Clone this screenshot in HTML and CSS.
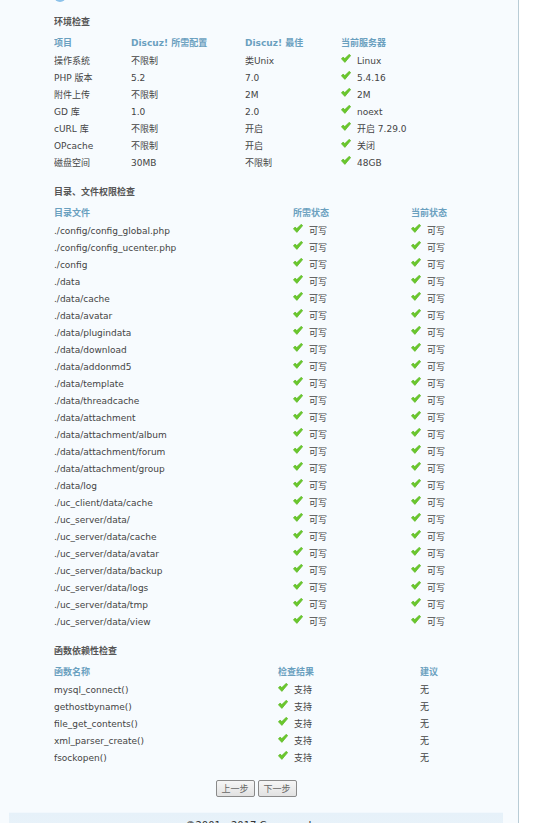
FILE: index.html
```html
<!DOCTYPE html>
<html lang="zh-CN">
<head>
<meta charset="utf-8">
<title>Discuz! 安装向导</title>
<link rel="stylesheet" href="styles.css">
</head>
<body>
<div class="main">
  <div class="stepdot"></div>
  <div class="content">

    <div class="section">
      <h3 class="title">环境检查</h3>
      <div class="tb tb1">
        <div class="row head"><span>项目</span><span>Discuz! 所需配置</span><span>Discuz! 最佳</span><span>当前服务器</span></div>
        <div class="row"><span>操作系统</span><span>不限制</span><span>类Unix</span><span class="ok"><svg viewBox="0 0 10 9"><path d="M0.4 4.8 L2.1 3.1 L3.8 4.6 L8.3 0.3 L9.7 1.6 L3.9 8.4 Z"/></svg>Linux</span></div>
        <div class="row"><span>PHP 版本</span><span>5.2</span><span>7.0</span><span class="ok"><svg viewBox="0 0 10 9"><path d="M0.4 4.8 L2.1 3.1 L3.8 4.6 L8.3 0.3 L9.7 1.6 L3.9 8.4 Z"/></svg>5.4.16</span></div>
        <div class="row"><span>附件上传</span><span>不限制</span><span>2M</span><span class="ok"><svg viewBox="0 0 10 9"><path d="M0.4 4.8 L2.1 3.1 L3.8 4.6 L8.3 0.3 L9.7 1.6 L3.9 8.4 Z"/></svg>2M</span></div>
        <div class="row"><span>GD 库</span><span>1.0</span><span>2.0</span><span class="ok"><svg viewBox="0 0 10 9"><path d="M0.4 4.8 L2.1 3.1 L3.8 4.6 L8.3 0.3 L9.7 1.6 L3.9 8.4 Z"/></svg>noext</span></div>
        <div class="row"><span>cURL 库</span><span>不限制</span><span>开启</span><span class="ok"><svg viewBox="0 0 10 9"><path d="M0.4 4.8 L2.1 3.1 L3.8 4.6 L8.3 0.3 L9.7 1.6 L3.9 8.4 Z"/></svg>开启 7.29.0</span></div>
        <div class="row"><span>OPcache</span><span>不限制</span><span>开启</span><span class="ok"><svg viewBox="0 0 10 9"><path d="M0.4 4.8 L2.1 3.1 L3.8 4.6 L8.3 0.3 L9.7 1.6 L3.9 8.4 Z"/></svg>关闭</span></div>
        <div class="row"><span>磁盘空间</span><span>30MB</span><span>不限制</span><span class="ok"><svg viewBox="0 0 10 9"><path d="M0.4 4.8 L2.1 3.1 L3.8 4.6 L8.3 0.3 L9.7 1.6 L3.9 8.4 Z"/></svg>48GB</span></div>
      </div>
    </div>

    <div class="section">
      <h3 class="title">目录、文件权限检查</h3>
      <div class="tb tb2" id="dirs">
        <div class="row head"><span>目录文件</span><span>所需状态</span><span>当前状态</span></div>
      </div>
    </div>

    <div class="section">
      <h3 class="title">函数依赖性检查</h3>
      <div class="tb tb3">
        <div class="row head"><span>函数名称</span><span>检查结果</span><span>建议</span></div>
        <div class="row"><span>mysql_connect()</span><span class="ok"><svg viewBox="0 0 10 9"><path d="M0.4 4.8 L2.1 3.1 L3.8 4.6 L8.3 0.3 L9.7 1.6 L3.9 8.4 Z"/></svg>支持</span><span>无</span></div>
        <div class="row"><span>gethostbyname()</span><span class="ok"><svg viewBox="0 0 10 9"><path d="M0.4 4.8 L2.1 3.1 L3.8 4.6 L8.3 0.3 L9.7 1.6 L3.9 8.4 Z"/></svg>支持</span><span>无</span></div>
        <div class="row"><span>file_get_contents()</span><span class="ok"><svg viewBox="0 0 10 9"><path d="M0.4 4.8 L2.1 3.1 L3.8 4.6 L8.3 0.3 L9.7 1.6 L3.9 8.4 Z"/></svg>支持</span><span>无</span></div>
        <div class="row"><span>xml_parser_create()</span><span class="ok"><svg viewBox="0 0 10 9"><path d="M0.4 4.8 L2.1 3.1 L3.8 4.6 L8.3 0.3 L9.7 1.6 L3.9 8.4 Z"/></svg>支持</span><span>无</span></div>
        <div class="row"><span>fsockopen()</span><span class="ok"><svg viewBox="0 0 10 9"><path d="M0.4 4.8 L2.1 3.1 L3.8 4.6 L8.3 0.3 L9.7 1.6 L3.9 8.4 Z"/></svg>支持</span><span>无</span></div>
      </div>
    </div>

    <div class="btnbox">
      <button class="btn" type="button">上一步</button>
      <button class="btn" type="button">下一步</button>
    </div>
  </div>
  <div class="footer">©2001 - 2017 Comsenz Inc.</div>
</div>
<script>
(function () {
  var dirs = ["./config/config_global.php","./config/config_ucenter.php","./config","./data","./data/cache","./data/avatar","./data/plugindata","./data/download","./data/addonmd5","./data/template","./data/threadcache","./data/attachment","./data/attachment/album","./data/attachment/forum","./data/attachment/group","./data/log","./uc_client/data/cache","./uc_server/data/","./uc_server/data/cache","./uc_server/data/avatar","./uc_server/data/backup","./uc_server/data/logs","./uc_server/data/tmp","./uc_server/data/view"];
  var ok = '<span class="ok"><svg viewBox="0 0 10 9"><path d="M0.4 4.8 L2.1 3.1 L3.8 4.6 L8.3 0.3 L9.7 1.6 L3.9 8.4 Z"/></svg>可写</span>';
  var tb = document.getElementById("dirs");
  var html = "";
  for (var i = 0; i < dirs.length; i++) {
    html += '<div class="row"><span>' + dirs[i] + "</span>" + ok + ok + "</div>";
  }
  tb.insertAdjacentHTML("beforeend", html);
})();
</script>
</body>
</html>
```

FILE: styles.css
```css
html, body {
  margin: 0;
  padding: 0;
  background: #ffffff;
}
body {
  font-family: "DejaVu Sans", "Noto Sans CJK SC", sans-serif;
  font-size: 9px;
  color: #444;
  height: 823px;
  overflow: hidden;
}
.main {
  width: 518px;
  min-height: 823px;
  background: #f7fbfe;
  border-right: 1px solid #b9ccd6;
  position: relative;
}
.stepdot {
  position: absolute;
  left: 54px;
  top: -10px;
  width: 12px;
  height: 12px;
  border-radius: 50%;
  background: #8cc2ea;
}
.content {
  padding: 14px 0 0 54px;
}
.section {
  margin-bottom: 13px;
}
.title {
  margin: 0 0 3px;
  font-size: 9px;
  line-height: 17px;
  height: 17px;
  font-weight: bold;
  color: #555;
  overflow: hidden;
}
.tb {
  display: flex;
  flex-direction: column;
  width: 440px;
}
.row {
  display: grid;
  height: 17px;
  align-items: center;
  white-space: nowrap;
  overflow: hidden;
}
.row > span {
  line-height: 12px;
  height: 12px;
  overflow: visible;
}
.row.head {
  height: 18px;
  font-weight: bold;
  color: #6aa0bf;
}
.tb1 .row { grid-template-columns: 77px 114px 96px 1fr; }
.tb2 .row { grid-template-columns: 239px 118px 1fr; }
.tb3 .row { grid-template-columns: 224px 142px 1fr; }
.ok {
  display: flex;
  align-items: center;
}
.ok svg {
  width: 10px;
  height: 9px;
  margin: -5px 6px 0 0;
  fill: #6ac82c;
  stroke: #5bb625;
  stroke-width: 0.7;
  stroke-linejoin: round;
  flex: none;
}
.btnbox {
  display: flex;
  justify-content: center;
  gap: 3px;
  padding: 14px 6px 15px 0;
  margin: -13px 0 0 -54px;
}
.btn {
  height: 17px;
  width: 39px;
  padding: 0;
  font-family: "Noto Sans CJK SC", sans-serif;
  font-size: 9px;
  line-height: 15px;
  color: #666;
  border: 1px solid #8a8a8a;
  border-radius: 2px;
  background: linear-gradient(#f6f6f6, #e2e2e2);
}
.footer {
  margin: 0 15px 0 9px;
  background: linear-gradient(#e6f1f9, #eef5fb);
  border-top: 1px solid #f2f8fd;
  padding-top: 6px;
  text-align: center;
  font-size: 10px;
  line-height: 14px;
  color: #333;
  height: 40px;
}
```
